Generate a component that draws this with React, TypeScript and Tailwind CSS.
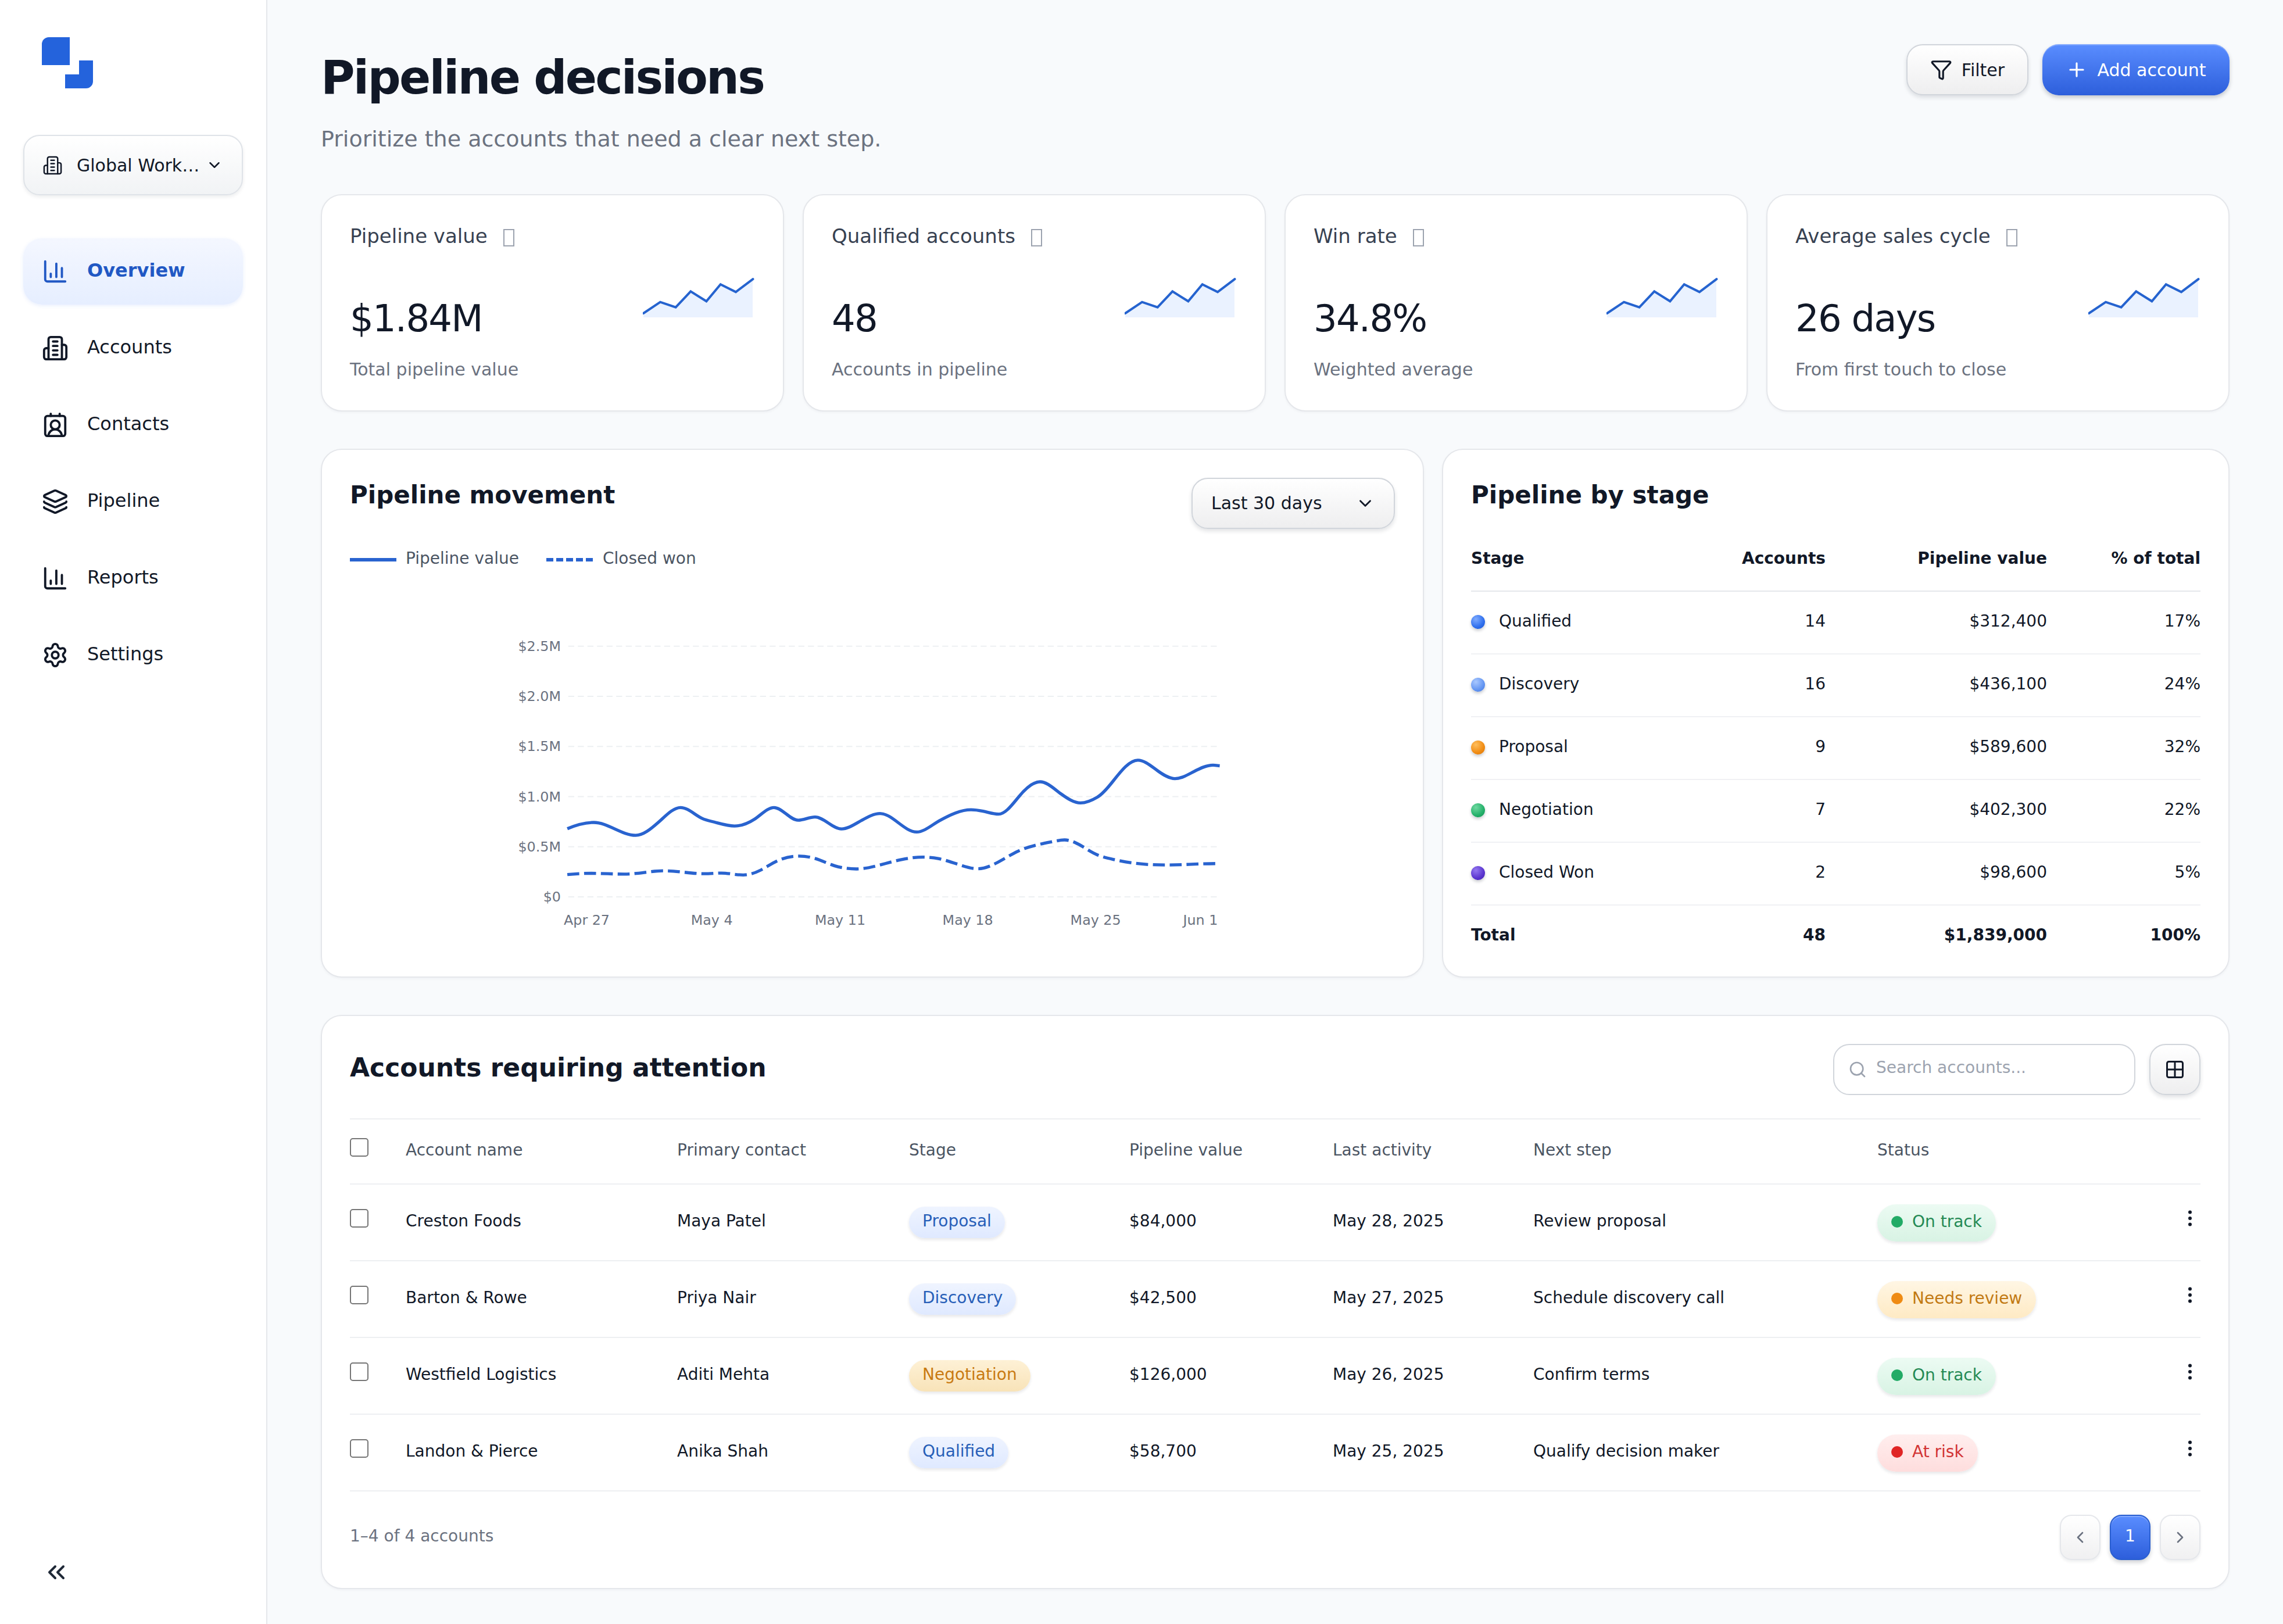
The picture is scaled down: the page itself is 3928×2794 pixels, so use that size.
import React from 'react';
import {
    ChevronDown, ChevronLeft, ChevronRight, ChevronsLeft, EllipsisVertical,
    Funnel, Grid2x2, Layers, Plus, Search, Settings,
} from 'lucide-react';

type IconProps = { size?: number; className?: string; strokeWidth?: number };

const BuildingIcon: React.FC<IconProps> = ({ size = 24, className, strokeWidth = 2 }) => (
    <svg width={size} height={size} viewBox="0 0 24 24" fill="none" stroke="currentColor" strokeWidth={strokeWidth} strokeLinecap="round" strokeLinejoin="round" className={className}>
        <path d="M6 22V4a2 2 0 0 1 2-2h8a2 2 0 0 1 2 2v18Z" />
        <path d="M6 12H4a2 2 0 0 0-2 2v6a2 2 0 0 0 2 2h2" />
        <path d="M18 9h2a2 2 0 0 1 2 2v9a2 2 0 0 1-2 2h-2" />
        <path d="M10 6h4M10 10h4M10 14h4M10 18h4" />
    </svg>
);

const ChartIcon: React.FC<IconProps> = ({ size = 24, className }) => (
    <svg width={size} height={size} viewBox="0 0 24 24" fill="none" stroke="currentColor" strokeWidth={2} strokeLinecap="round" strokeLinejoin="round" className={className}>
        <path d="M3 3v16a2 2 0 0 0 2 2h16" />
        <path d="M18 17V9M13 17V5M8 17v-3" />
    </svg>
);

const ContactIcon: React.FC<IconProps> = ({ size = 24, className }) => (
    <svg width={size} height={size} viewBox="0 0 24 24" fill="none" stroke="currentColor" strokeWidth={2} strokeLinecap="round" strokeLinejoin="round" className={className}>
        <path d="M16 2v2M8 2v2" />
        <path d="M17.915 22a6 6 0 0 0-12 0" />
        <circle cx="12" cy="12" r="4" />
        <rect x="3" y="4" width="18" height="18" rx="2" />
    </svg>
);

const navItems: { label: string; icon: React.ElementType; active?: boolean }[] = [
    { label: 'Overview', icon: ChartIcon, active: true },
    { label: 'Accounts', icon: BuildingIcon },
    { label: 'Contacts', icon: ContactIcon },
    { label: 'Pipeline', icon: Layers },
    { label: 'Reports', icon: ChartIcon },
    { label: 'Settings', icon: Settings },
];

const stats = [
    { label: 'Pipeline value', value: '$1.84M', note: 'Total pipeline value' },
    { label: 'Qualified accounts', value: '48', note: 'Accounts in pipeline' },
    { label: 'Win rate', value: '34.8%', note: 'Weighted average' },
    { label: 'Average sales cycle', value: '26 days', note: 'From first touch to close' },
];

const stages = [
    { name: 'Qualified', accounts: 14, value: '$312,400', share: '17%', dot: 'bg-[radial-gradient(circle_at_35%_30%,#7fabff,#2f6fed_60%,#1f56cc)]' },
    { name: 'Discovery', accounts: 16, value: '$436,100', share: '24%', dot: 'bg-[radial-gradient(circle_at_35%_30%,#a9c8ff,#6496f2_60%,#4678dc)]' },
    { name: 'Proposal', accounts: 9, value: '$589,600', share: '32%', dot: 'bg-[radial-gradient(circle_at_35%_30%,#ffbe5c,#f08c14_60%,#d87508)]' },
    { name: 'Negotiation', accounts: 7, value: '$402,300', share: '22%', dot: 'bg-[radial-gradient(circle_at_35%_30%,#6fd9a0,#24b06a_60%,#169052)]' },
    { name: 'Closed Won', accounts: 2, value: '$98,600', share: '5%', dot: 'bg-[radial-gradient(circle_at_35%_30%,#9478f0,#5a35cf_60%,#4322ac)]' },
];

const stageStyles: Record<string, string> = {
    Proposal: 'from-[#eff4ff] to-[#dfe9ff] text-[#285fb8]',
    Discovery: 'from-[#eff4ff] to-[#dfe9ff] text-[#285fb8]',
    Qualified: 'from-[#eff4ff] to-[#dfe9ff] text-[#285fb8]',
    Negotiation: 'from-[#fef1d6] to-[#f8e3b8] text-[#c97a12]',
};

const statusStyles: Record<string, { pill: string; dot: string }> = {
    'On track': { pill: 'from-[#ecfbf3] to-[#d8f3e4] text-[#258a55]', dot: 'bg-[#22ab66]' },
    'Needs review': { pill: 'from-[#fff6e4] to-[#feeac4] text-[#c27a14]', dot: 'bg-[#ef8b13]' },
    'At risk': { pill: 'from-[#ffeeee] to-[#fedddd] text-[#d23434]', dot: 'bg-[#e02525]' },
};

const accounts = [
    { name: 'Creston Foods', contact: 'Maya Patel', stage: 'Proposal', value: '$84,000', activity: 'May 28, 2025', next: 'Review proposal', status: 'On track' },
    { name: 'Barton & Rowe', contact: 'Priya Nair', stage: 'Discovery', value: '$42,500', activity: 'May 27, 2025', next: 'Schedule discovery call', status: 'Needs review' },
    { name: 'Westfield Logistics', contact: 'Aditi Mehta', stage: 'Negotiation', value: '$126,000', activity: 'May 26, 2025', next: 'Confirm terms', status: 'On track' },
    { name: 'Landon & Pierce', contact: 'Anika Shah', stage: 'Qualified', value: '$58,700', activity: 'May 25, 2025', next: 'Qualify decision maker', status: 'At risk' },
];

// [x, y, slope]
type Knot = [number, number, number];

const valueSeries: Knot[] = [
    [96.1, 345.7, -0.42], [141.7, 335, 0], [213.8, 357.1, 0], [252.5, 335, -0.88], [290.9, 309.3, 0],
    [328.2, 328.2, 0.48], [348.9, 334.3, 0.26], [383.7, 341.1, 0], [418, 329.5, -0.65], [451.7, 309.3, 0],
    [493.2, 331.1, 0], [522.2, 325.7, 0], [567.8, 346.1, 0], [601.8, 331.8, -0.55], [634.1, 319.6, 0],
    [697.1, 351.4, 0], [737, 331.6, -0.55], [790.8, 313.2, 0], [811.5, 315.7, 0.2], [838.1, 320.7, 0],
    [872.9, 290.7, -1.2], [909.4, 265, 0], [945.8, 286, 0.72], [979, 301.4, 0], [1008, 291.5, -0.6],
    [1035, 264, -1.27], [1077.7, 227.9, 0], [1111.7, 246, 0.72], [1141.5, 259.6, 0], [1173.8, 247.6, -0.52],
    [1207, 236.4, 0], [1218.6, 237.5, 0.1],
];

const wonSeries: Knot[] = [
    [96.1, 424.6, -0.1], [137.5, 422.5, 0], [193.9, 423.9, 0], [262.7, 418.2, 0], [332.3, 423.2, 0],
    [361.4, 422.1, 0], [398.7, 425.4, 0], [427.7, 417.5, -0.5], [456.7, 401.4, -0.48], [494.8, 392.9, 0],
    [523, 397.1, 0.3], [556.2, 409.6, 0.3], [593.5, 415, 0], [635, 407.9, -0.26], [672.3, 398.6, -0.2],
    [707.9, 394.6, 0], [734.4, 397.1, 0.2], [767.6, 406.8, 0.32], [802.4, 414.6, 0], [833.9, 405, -0.52],
    [871.2, 384.6, -0.48], [900.3, 374.6, -0.26], [933.4, 367.5, -0.2], [951.6, 365, 0], [970.7, 370, 0.45],
    [987.3, 379.3, 0.62], [1008, 390.7, 0.42], [1037, 398.9, 0.22], [1074.3, 405.4, 0.12], [1128.2, 408.2, 0],
    [1165.5, 407.1, -0.05], [1218.6, 405.7, 0],
];

const smoothPath = (knots: Knot[]): string =>
    knots.slice(1).reduce((d, [x, y, m], i) => {
        const [px, py, pm] = knots[i];
        const h = (x - px) / 3;
        return `${d} C${px + h} ${py + pm * h} ${x - h} ${y - m * h} ${x} ${y}`;
    }, `M${knots[0][0]} ${knots[0][1]}`);

const yLabels = ['$2.5M', '$2.0M', '$1.5M', '$1.0M', '$0.5M', '$0'];
const xLabels = [
    { text: 'Apr 27', x: 90 },
    { text: 'May 4', x: 308.7 },
    { text: 'May 11', x: 522 },
    { text: 'May 18', x: 741.6 },
    { text: 'May 25', x: 961.6 },
    { text: 'Jun 1', x: 1155.5 },
];

const accountCols = 'grid grid-cols-[96px_467px_399px_379px_350px_345px_592px_1fr_36px]';
const stageCols = 'grid grid-cols-[380px_230px_381px_1fr] items-center';
const card = 'bg-white border-2 border-[#e5e7eb] rounded-[36px] shadow-[0_2px_4px_rgba(15,23,42,0.04)]';
const softButton = 'bg-linear-to-b from-white to-[#eeeeef] border-2 border-[#d1d5db] shadow-[0_4px_7px_rgba(15,23,42,0.12)]';

const Sidebar: React.FC = () => (
    <aside className="w-[460px] shrink-0 bg-white border-r-2 border-[#e5e7eb] px-[40px] pt-[64px] flex flex-col">
        <svg width="88" height="88" viewBox="0 0 88 88" fill="#2463dc" className="ml-[32px] shrink-0">
            <path d="M12 0H48V48H0V12A12 12 0 0 1 12 0Z" />
            <path d="M64 40H88V76A12 12 0 0 1 76 88H40V64H64Z" />
        </svg>

        <button className="mt-[80px] h-[104px] w-[378px] rounded-[28px] border-2 border-[#dfe3e8] bg-linear-to-b from-white to-[#f1f3f5] shadow-[0_3px_6px_rgba(15,23,42,0.08)] flex items-center pl-[31px] pr-[32px] text-[30px]">
            <BuildingIcon size={35} strokeWidth={1.7} className="shrink-0" />
            <span className="ml-[24px] flex-1 text-left whitespace-nowrap">Global Work…</span>
            <ChevronDown size={30} className="shrink-0" />
        </button>

        <nav className="mt-[74px] flex flex-col gap-[18px]">
            {navItems.map(({ label, icon: Icon, active }) => (
                <a
                    key={label}
                    className={`h-[114px] w-[378px] rounded-[32px] pl-[32px] flex items-center gap-[32px] text-[32px] ${active
                        ? 'bg-linear-to-b from-[#f4f7ff] to-[#e6eeff] text-[#2158c4] font-bold shadow-[0_2px_6px_rgba(37,99,235,0.10)]'
                        : ''}`}
                >
                    <Icon size={46} />
                    <span className="pb-[4px]">{label}</span>
                </a>
            ))}
        </nav>

        <ChevronsLeft size={48} className="mt-auto mb-[65px] ml-[33px] text-[#1f2937]" />
    </aside>
);

const Sparkline: React.FC = () => (
    <svg width="192" height="70" viewBox="0 0 192 70" fill="none" className="mr-[1px]">
        <path d="M1 61L30 41.6L56.6 50.7L82.3 23.4L109.4 40.3L133.7 11.3L160 24.3L189 2.7V68H1Z" fill="#eaf2ff" />
        <path d="M1 61L30 41.6L56.6 50.7L82.3 23.4L109.4 40.3L133.7 11.3L160 24.3L189.5 2.2" stroke="#2563cf" strokeWidth="4" strokeLinecap="round" strokeLinejoin="miter" />
    </svg>
);

const MovementChart: React.FC = () => (
    <svg width="1242" height="540" viewBox="0 0 1242 540" fill="none" className="mt-[102px] mx-auto">
        {yLabels.map((label, i) => (
            <g key={label}>
                <line x1="97.7" x2="1218" y1={31.8 + i * 86.22} y2={31.8 + i * 86.22} stroke="#edf0f2" strokeWidth="2" strokeDasharray="10.3 6.2" />
                <text x="85" y={40 + i * 86.22} textAnchor="end" className="fill-[#6b7280] text-[23.8px]">{label}</text>
            </g>
        ))}
        {xLabels.map(({ text, x }) => (
            <text key={text} x={x} y="511.4" className="fill-[#6b7280] text-[23.8px]">{text}</text>
        ))}
        <path d={smoothPath(valueSeries)} stroke="#2963cf" strokeWidth="5.3" />
        <path d={smoothPath(wonSeries)} stroke="#2963cf" strokeWidth="5.3" strokeDasharray="20.6 8.3" />
    </svg>
);

const Checkbox: React.FC = () => (
    <input type="checkbox" className="block appearance-none size-[32px] rounded-[5px] border-2 border-[#767676] bg-white mb-[14px]" />
);

const App: React.FC = () => {
    return (
        <div className="w-[3928px] h-[2794px] flex bg-[#f8fafc] text-[#111827] font-['DejaVu_Sans',sans-serif] overflow-hidden">
            <Sidebar />

            <main className="flex-1 pl-[92px] pr-[92px] pt-[76px]">
                <header className="h-[258px] flex justify-between items-start">
                    <div className="pt-[18px]">
                        <h1 className="text-[80px] leading-[80px] font-bold tracking-[-0.035em]">Pipeline decisions</h1>
                        <p className="mt-[41px] text-[38px] leading-[48px] text-[#6b7280]">Prioritize the accounts that need a clear next step.</p>
                    </div>
                    <div className="flex gap-[24px] text-[30px]">
                        <button className={`w-[210px] h-[88px] rounded-[28px] flex items-center justify-center gap-[16px] ${softButton}`}>
                            <Funnel size={38} />
                            Filter
                        </button>
                        <button className="w-[322px] h-[88px] rounded-[28px] flex items-center justify-center gap-[16px] text-white bg-linear-to-b from-[#5a8dff] to-[#2d5edb] shadow-[inset_0_2px_0_rgba(255,255,255,0.25),0_4px_7px_rgba(15,23,42,0.22)]">
                            <Plus size={38} />
                            Add account
                        </button>
                    </div>
                </header>

                {/* Stats */}
                <section className="grid grid-cols-4 gap-[32px]">
                    {stats.map((s) => (
                        <div key={s.label} className={`h-[374px] px-[48px] pt-[50px] ${card}`}>
                            <div className="flex items-center text-[34px] leading-[40px] text-[#374151]">
                                {s.label}
                                <span className="ml-[27px] mt-[5px] w-[19px] h-[30px] border-2 border-[#9ca3af]" />
                            </div>
                            <div className="mt-[52px] h-[102px] flex justify-between">
                                <div className="self-end text-[64px] leading-[64px] tracking-[-0.028em]">{s.value}</div>
                                <Sparkline />
                            </div>
                            <div className="mt-[38px] text-[30px] leading-[36px] text-[#6b7280]">{s.note}</div>
                        </div>
                    ))}
                </section>

                {/* Chart and stage breakdown */}
                <section className="mt-[64px] grid grid-cols-[1898px_1355px] gap-[31px]">
                    <div className={`h-[910px] p-[48px] ${card}`}>
                        <div className="flex justify-between items-start">
                            <h2 className="mt-[5px] text-[42px] leading-[50px] font-bold">Pipeline movement</h2>
                            <button className={`w-[350px] h-[88px] pl-[32px] pr-[32px] rounded-[28px] flex items-center justify-between text-[30px] ${softButton}`}>
                                <span className="pb-[2px]">Last 30 days</span>
                                <ChevronDown size={34} />
                            </button>
                        </div>
                        <div className="mt-[32px] flex text-[28px] leading-[38px] text-[#4b5563]">
                            <span className="mt-[18px] mr-[16px] w-[80px] border-t-[6px] border-[#2963cf]" />
                            Pipeline value
                            <span className="mt-[18px] ml-[47px] mr-[17px] w-[80px] border-t-[6px] border-dashed border-[#2963cf]" />
                            Closed won
                        </div>
                        <div className="-mt-[2px]">
                            <MovementChart />
                        </div>
                    </div>

                    <div className={`h-[910px] px-[48px] pt-[48px] text-[28px] ${card}`}>
                        <h2 className="h-[86px] pt-[5px] text-[42px] leading-[50px] font-bold">Pipeline by stage</h2>
                        <div className={`h-[110px] pb-[2px] font-bold border-b-2 border-[#e5e7eb] ${stageCols}`}>
                            <span>Stage</span>
                            <span className="text-right">Accounts</span>
                            <span className="text-right">Pipeline value</span>
                            <span className="text-right">% of total</span>
                        </div>
                        {stages.map((s) => (
                            <div key={s.name} className={`h-[108px] pb-[4px] border-b-2 border-[#f0f1f4] ${stageCols}`}>
                                <span className="flex items-center gap-[24px]">
                                    <i className={`mt-[2px] size-[24px] rounded-full shadow-[0_3px_5px_rgba(15,23,42,0.22)] ${s.dot}`} />
                                    {s.name}
                                </span>
                                <span className="text-right">{s.accounts}</span>
                                <span className="text-right">{s.value}</span>
                                <span className="text-right">{s.share}</span>
                            </div>
                        ))}
                        <div className={`h-[106px] pb-[4px] font-bold ${stageCols}`}>
                            <span>Total</span>
                            <span className="text-right">48</span>
                            <span className="text-right">$1,839,000</span>
                            <span className="text-right">100%</span>
                        </div>
                    </div>
                </section>

                {/* Accounts table */}
                <section className={`mt-[64px] h-[988px] px-[48px] pt-[48px] text-[28px] ${card}`}>
                    <div className="h-[88px] flex items-center gap-[24px]">
                        <h2 className="mr-auto pb-[6px] text-[44px] leading-[52px] font-bold">Accounts requiring attention</h2>
                        <div className="w-[520px] h-[88px] rounded-[28px] border-2 border-[#d1d5db] bg-white flex items-center pl-[24px] gap-[16px] text-[#9ca3af]">
                            <Search size={32} />
                            <span className="pb-[7px]">Search accounts...</span>
                        </div>
                        <button className={`size-[88px] rounded-[28px] flex items-center justify-center ${softButton}`}>
                            <Grid2x2 size={36} />
                        </button>
                    </div>

                    <div className="mt-[40px] border-t-2 border-[#edeff2]">
                        <div className={`h-[112px] items-center border-b-2 border-[#edeff2] text-[#4b5563] ${accountCols}`}>
                            <Checkbox />
                            {['Account name', 'Primary contact', 'Stage', 'Pipeline value', 'Last activity', 'Next step', 'Status'].map((h) => (
                                <span key={h} className="pb-[4px]">{h}</span>
                            ))}
                        </div>
                        {accounts.map((a) => (
                            <div key={a.name} className={`h-[132px] items-center border-b-2 border-[#edeff2] ${accountCols}`}>
                                <Checkbox />
                                <span className="pb-[4px]">{a.name}</span>
                                <span className="pb-[4px]">{a.contact}</span>
                                <span className="flex">
                                    <span className={`h-[54px] px-[23px] pb-[4px] flex items-center rounded-full bg-linear-to-b shadow-[0_3px_5px_rgba(15,23,42,0.10)] ${stageStyles[a.stage]}`}>
                                        {a.stage}
                                    </span>
                                </span>
                                <span className="pb-[4px]">{a.value}</span>
                                <span className="pb-[4px]">{a.activity}</span>
                                <span className="pb-[4px]">{a.next}</span>
                                <span className="flex pt-[2px]">
                                    <span className={`h-[64px] px-[24px] pb-[5px] gap-[16px] flex items-center rounded-full bg-linear-to-b shadow-[0_3px_5px_rgba(15,23,42,0.10)] ${statusStyles[a.status].pill}`}>
                                        <i className={`size-[20px] rounded-full ${statusStyles[a.status].dot}`} />
                                        {a.status}
                                    </span>
                                </span>
                                <EllipsisVertical size={36} className="mb-[14px]" />
                            </div>
                        ))}
                    </div>

                    <div className="mt-[40px] flex items-center gap-[16px]">
                        <span className="mr-auto pb-[4px] text-[#6b7280]">1–4 of 4 accounts</span>
                        <button className="w-[70px] h-[78px] rounded-[20px] border-2 border-[#e5e7eb] bg-linear-to-b from-white to-[#f0f0f1] shadow-[0_3px_5px_rgba(15,23,42,0.07)] flex items-center justify-center text-[#6b7280]">
                            <ChevronLeft size={32} />
                        </button>
                        <button className="w-[70px] h-[78px] pb-[5px] rounded-[20px] border-2 border-[#2a5fd0] bg-linear-to-b from-[#5a8dff] to-[#2d5edb] shadow-[inset_0_2px_0_rgba(255,255,255,0.25),0_4px_7px_rgba(15,23,42,0.2)] text-white">
                            1
                        </button>
                        <button className="w-[70px] h-[78px] rounded-[20px] border-2 border-[#e5e7eb] bg-linear-to-b from-white to-[#f0f0f1] shadow-[0_3px_5px_rgba(15,23,42,0.07)] flex items-center justify-center text-[#6b7280]">
                            <ChevronRight size={32} />
                        </button>
                    </div>
                </section>
            </main>
        </div>
    );
};

export default App;
